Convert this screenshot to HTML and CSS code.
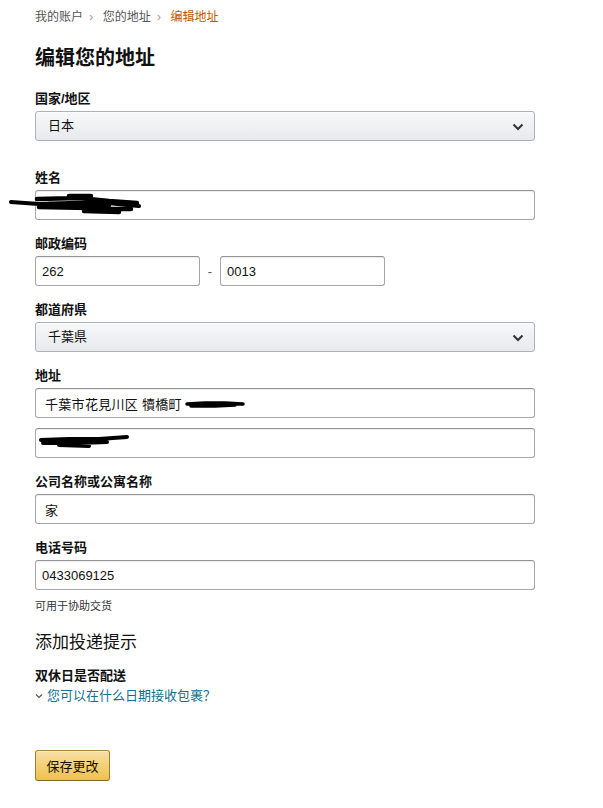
FILE: index.html
```html
<!DOCTYPE html>
<html lang="zh-CN">

<head>
    <meta charset="UTF-8">
    <meta name="viewport" content="width=device-width, initial-scale=1.0">
    <title>编辑地址</title>

    <link rel="stylesheet" href="styles.css">

</head>

<body>
    <div class="page">
        <div class="crumbs">
            <span class="crumb">我的账户</span>
            <span class="sep">›</span>
            <span class="crumb">您的地址</span>
            <span class="sep">›</span>
            <span class="crumb current">编辑地址</span>
        </div>

        <h1>编辑您的地址</h1>

        <div class="field first">
            <label>国家/地区</label>
            <div class="dropdown">
                <span>日本</span>
                <svg class="chev" width="12" height="8" viewBox="0 0 12 8"><path d="M1.5 1.5 L6 6 L10.5 1.5" fill="none" stroke="#333" stroke-width="2"/></svg>
            </div>
        </div>

        <div class="field wide-gap">
            <label>姓名</label>
            <div class="box">
                <input class="text" type="text" value="">
                <svg class="scribble name-scribble" width="135" height="22" viewBox="0 0 135 22">
                    <path d="M2 9 L30 11 L60 10 L90 9 L118 12 L130 13" stroke="#000" stroke-width="4" fill="none" stroke-linecap="round"/>
                    <path d="M28 6 L70 5 L100 8 L128 10 M30 14 L80 15 L122 16 M60 3 L82 3 M75 18 L110 19 M40 11 L100 12" stroke="#000" stroke-width="4.5" fill="none" stroke-linecap="round"/>
                </svg>
            </div>
        </div>

        <div class="field">
            <label>邮政编码</label>
            <div class="zip">
                <input class="text short" type="text" value="262">
                <span class="dash">-</span>
                <input class="text short" type="text" value="0013">
            </div>
        </div>

        <div class="field">
            <label>都道府県</label>
            <div class="dropdown">
                <span>千葉県</span>
                <svg class="chev" width="12" height="8" viewBox="0 0 12 8"><path d="M1.5 1.5 L6 6 L10.5 1.5" fill="none" stroke="#333" stroke-width="2"/></svg>
            </div>
        </div>

        <div class="field">
            <label>地址</label>
            <div class="box">
                <input class="text addr" type="text" value="千葉市花見川区 犢橋町">
                <svg class="scribble addr-scribble" width="62" height="10" viewBox="0 0 62 10">
                    <path d="M2 5 L20 4 L40 4 L58 5 M6 7 L30 7 L50 6" stroke="#000" stroke-width="3.5" fill="none" stroke-linecap="round"/>
                </svg>
            </div>
            <div class="box second">
                <input class="text" type="text" value="">
                <svg class="scribble line-scribble" width="92" height="14" viewBox="0 0 92 14">
                    <path d="M2 6 L30 5 L60 5 L88 3 M4 9 L40 9 L68 8 M20 11 L50 12" stroke="#000" stroke-width="4" fill="none" stroke-linecap="round"/>
                </svg>
            </div>
        </div>

        <div class="field">
            <label>公司名称或公寓名称</label>
            <input class="text addr" type="text" value="家">
        </div>

        <div class="field">
            <label>电话号码</label>
            <input class="text" type="text" value="0433069125">
            <p class="hint">可用于协助交货</p>
        </div>

        <h2>添加投递提示</h2>
        <p class="sub">双休日是否配送</p>
        <a class="expander" href="#"><svg width="8" height="6" viewBox="0 0 8 6"><path d="M1 1.5 L4 4.5 L7 1.5" fill="none" stroke="#555" stroke-width="1.2"/></svg>您可以在什么日期接收包裹？</a>

        <button class="save">保存更改</button>
    </div>
</body>

</html>
```

FILE: styles.css
```css
* {
    box-sizing: border-box;
}

html,
body {
    background-color: #fff;
    margin: 0;
    padding: 0;
    color: #111;
    font-family: Arial, "Liberation Sans", "Noto Sans CJK SC", sans-serif;
    font-size: 13px;
}

.page {
    padding: 8px 0 0 35px;
    width: 535px;
}

.crumbs {
    height: 18px;
    font-size: 12px;
    line-height: 18px;
    color: #555;
}

.crumbs .sep {
    color: #999;
    margin: 0 6px 0 3px;
}

.crumbs .current {
    color: #c45500;
}

h1 {
    margin: 18px 0 0;
    height: 28px;
    font-size: 20px;
    line-height: 28px;
    font-weight: bold;
}

.field {
    margin-top: 15px;
}

.field.first {
    margin-top: 18px;
}

.field.wide-gap {
    margin-top: 28px;
}

label {
    display: block;
    height: 18px;
    font-weight: bold;
    line-height: 18px;
    margin-bottom: 3px;
}

.dropdown {
    position: relative;
    height: 30px;
    border: 1px solid #adb1b8;
    border-radius: 3px;
    background: linear-gradient(#f7f8fa, #e7e9ec);
    padding: 0 12px;
    line-height: 28px;
    box-shadow: 0 1px 0 rgba(255, 255, 255, .6) inset;
}

.dropdown .chev {
    position: absolute;
    right: 10px;
    top: 11px;
}

.text {
    display: block;
    width: 100%;
    height: 30px;
    border: 1px solid #a6a6a6;
    border-top-color: #949494;
    border-radius: 3px;
    padding: 0 6px;
    font-family: inherit;
    font-size: 13px;
    color: #111;
    background: #fff;
    box-shadow: 0 1px 0 rgba(255, 255, 255, .5), 0 1px 0 rgba(0, 0, 0, .07) inset;
}

.text.addr {
    padding-left: 9px;
    letter-spacing: 0.3px;
}

.box {
    position: relative;
}

.box.second {
    margin-top: 10px;
}

.scribble {
    position: absolute;
}

.name-scribble {
    left: -26px;
    top: 3px;
}

.addr-scribble {
    left: 150px;
    top: 11px;
}

.line-scribble {
    left: 4px;
    top: 6px;
}

.zip {
    display: flex;
    align-items: center;
}

.zip .short {
    width: 165px;
}

.dash {
    width: 20px;
    text-align: center;
    color: #555;
}

.hint {
    margin: 8px 0 0;
    height: 16px;
    font-size: 11px;
    line-height: 16px;
    color: #333;
}

h2 {
    margin: 17px 0 0;
    height: 24px;
    font-size: 17px;
    line-height: 24px;
    font-weight: normal;
}

.sub {
    margin: 12px 0 0;
    height: 18px;
    font-weight: bold;
    line-height: 18px;
}

.expander {
    display: flex;
    align-items: center;
    gap: 4px;
    margin-top: 3px;
    height: 16px;
    line-height: 16px;
    color: #0f6f94;
    text-decoration: none;
}

.save {
    display: block;
    margin-top: 46px;
    width: 75px;
    height: 31px;
    border: 1px solid #a88734;
    border-color: #a88734 #9c7e31 #846a29;
    border-radius: 3px;
    background: linear-gradient(#f7dfa5, #f0c14b);
    font-family: inherit;
    font-size: 13px;
    color: #111;
    box-shadow: 0 1px 0 rgba(255, 255, 255, .4) inset;
}
```
